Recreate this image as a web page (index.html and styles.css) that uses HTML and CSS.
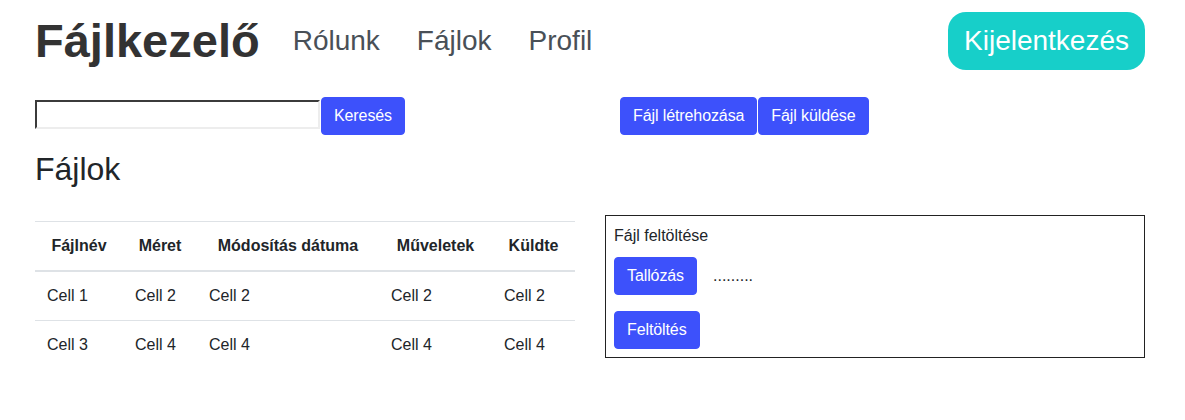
FILE: index.html
```html
<!DOCTYPE html>
<html lang="hu">
<head>
<meta charset="utf-8">
<title>Fájlkezelő</title>
<link rel="stylesheet" href="styles.css">
</head>
<body>
<div class="container">
  <header class="topbar">
    <div class="brand">Fájlkezelő</div>
    <nav class="nav">
      <a href="#" class="nav-link">Rólunk</a>
      <a href="#" class="nav-link">Fájlok</a>
      <a href="#" class="nav-link">Profil</a>
    </nav>
    <button class="logout">Kijelentkezés</button>
  </header>
  <main class="row">
    <section class="col">
      <form class="search"><input type="text" class="search-input"><button type="button" class="btn">Keresés</button></form>
      <h2 class="heading">Fájlok</h2>
      <table class="table">
        <colgroup>
          <col class="c1"><col class="c2"><col class="c3"><col class="c4"><col class="c5">
        </colgroup>
        <thead>
          <tr><th>Fájlnév</th><th>Méret</th><th>Módosítás dátuma</th><th>Műveletek</th><th>Küldte</th></tr>
        </thead>
        <tbody>
          <tr><td>Cell 1</td><td>Cell 2</td><td>Cell 2</td><td>Cell 2</td><td>Cell 2</td></tr>
          <tr><td>Cell 3</td><td>Cell 4</td><td>Cell 4</td><td>Cell 4</td><td>Cell 4</td></tr>
        </tbody>
      </table>
    </section>
    <section class="col">
      <div class="actions"><button class="btn">Fájl létrehozása</button><button class="btn">Fájl küldése</button></div>
      <div class="upload">
        <div class="upload-title">Fájl feltöltése</div>
        <div class="upload-pick"><button class="btn">Tallózás</button><span class="filename">.........</span></div>
        <div><button class="btn">Feltöltés</button></div>
      </div>
    </section>
  </main>
</div>
</body>
</html>
```

FILE: styles.css
```css
* { box-sizing: border-box; }
body {
  margin: 0;
  font-family: "Liberation Sans", Arial, sans-serif;
  font-size: 16px;
  line-height: 1.5;
  color: #212529;
  background: #fff;
}
.container {
  padding: 0 40px 0 35px;
}
.topbar {
  display: flex;
  align-items: center;
  padding-top: 12px;
}
.brand {
  font-size: 47px;
  font-weight: bold;
  color: #333;
  line-height: 58px;
}
.nav {
  display: flex;
  gap: 37px;
  margin-left: 33px;
  flex: 1;
}
.nav-link {
  font-size: 28px;
  color: #495057;
  text-decoration: none;
  line-height: 42px;
}
.logout {
  font-family: inherit;
  font-size: 28px;
  line-height: 42px;
  padding: 8px 16px;
  border: 0;
  border-radius: 18px;
  background: #17cfc9;
  color: #fff;
}
.row {
  display: grid;
  grid-template-columns: 540px 540px;
  gap: 30px;
  margin-top: 27px;
}
.btn {
  font-family: inherit;
  font-size: 16px;
  line-height: 24px;
  letter-spacing: -0.1px;
  padding: 6px 12px;
  border: 1px solid #3d51fb;
  border-radius: 4px;
  background: #3d51fb;
  color: #fff;
}
.search {
  display: flex;
  align-items: flex-start;
  margin: 0;
}
.search-input {
  width: 285px;
  height: 29px;
  margin-top: 3px;
  margin-right: 1px;
  border: 2px inset #ededed;
  border-top-color: #8f8f8f;
  border-left-color: #8f8f8f;
  font-family: inherit;
  font-size: 16px;
}
.heading {
  font-size: 32px;
  font-weight: normal;
  line-height: 38px;
  margin: 15px 0 0;
}
.table {
  width: 540px;
  margin-top: 33px;
  border-collapse: collapse;
  table-layout: fixed;
}
.c1 { width: 88px; }
.c2 { width: 74px; }
.c3 { width: 182px; }
.c4 { width: 113px; }
.c5 { width: 83px; }
.table th, .table td {
  padding: 12px;
  border-top: 1px solid #dee2e6;
  text-align: left;
  white-space: nowrap;
}
.table th {
  text-align: center;
  font-size: 16px;
  border-bottom: 2px solid #dee2e6;
  padding-left: 0;
  padding-right: 0;
}
.actions {
  display: flex;
  gap: 1px;
  margin-left: 15px;
}
.upload {
  margin-top: 80px;
  border: 1px solid #222;
  padding: 8px 8px 8px 8px;
}
.upload-title { line-height: 24px; }
.upload-pick {
  display: flex;
  align-items: center;
  gap: 16px;
  margin: 9px 0 16px;
}
```
